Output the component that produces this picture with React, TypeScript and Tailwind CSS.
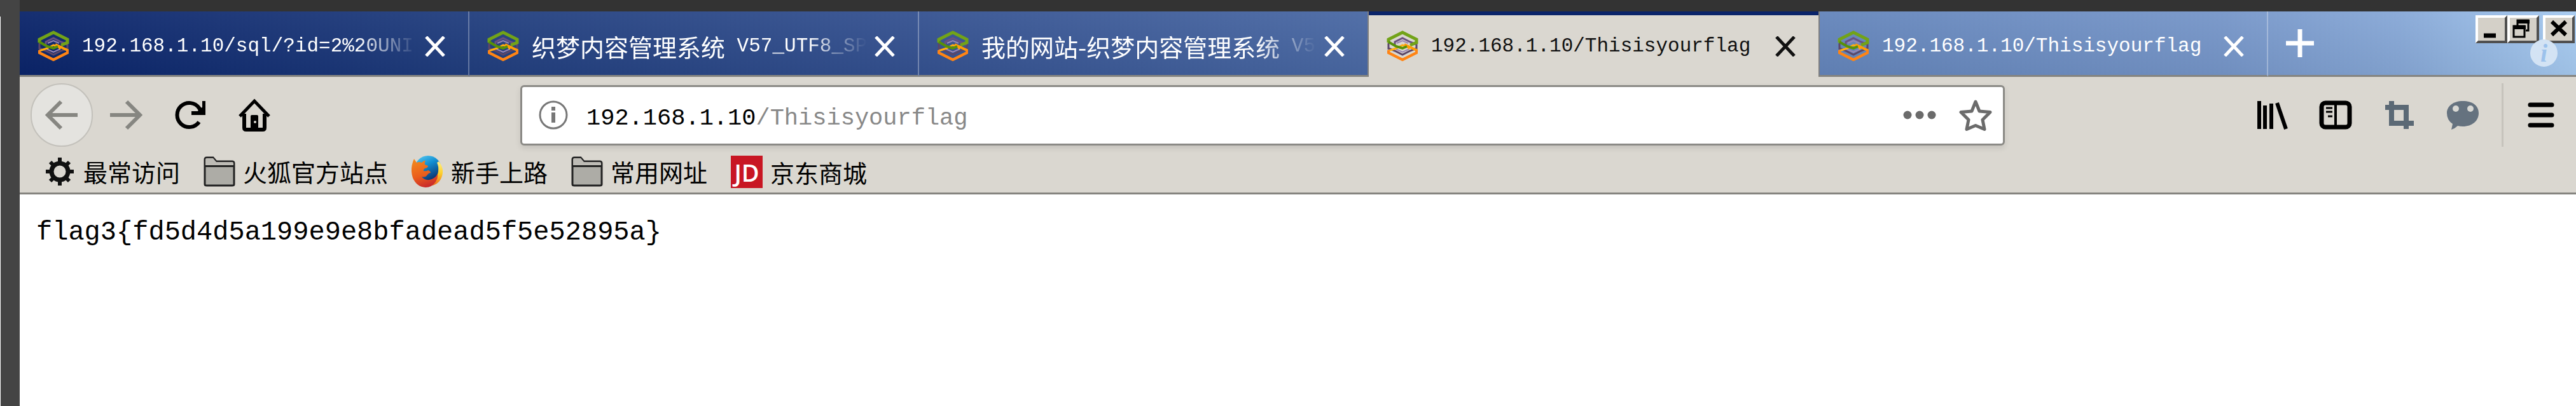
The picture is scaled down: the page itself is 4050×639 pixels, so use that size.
import React from "react";

const MONO = "font-['Liberation_Mono','Noto_Sans_CJK_SC',monospace]";
const CJK = "font-['Noto_Sans_CJK_SC',sans-serif]";

function Favicon() {
  return (
    <svg viewBox="0 0 50 50" className="h-[50px] w-[50px] shrink-0" fill="none" aria-hidden="true">
      <path d="M3 20v10M47 20v10M3 28l10 4 12 6 12-6 10-4" stroke="#5c4668" strokeWidth="3" />
      <path d="M13 24v-6l12-6 12 6 10 4" stroke="#6a5080" strokeWidth="3" />
      <path d="M14 29l11 5 11-5M16 20l9-4 9 4" stroke="#9a86b4" strokeWidth="2" />
      <path d="M3 19v-5L25 3l22 11v5l-10 4" stroke="#72a318" strokeWidth="5" />
      <path d="M36 29l-4-4-7-2-10 5-12 4" stroke="#ffae10" strokeWidth="3" />
      <path d="M28 22l19 9v4L25 46 3 35v-4" stroke="#ff9c08" strokeWidth="4" />
      <path d="M47 31v4L25 46 3 35v-4" stroke="#ff8316" strokeWidth="4" />
      <path d="M3 18l12 7 10 3 7-3" stroke="#579107" strokeWidth="4" />
    </svg>
  );
}

function CloseGlyph() {
  return (
    <svg viewBox="0 0 32 32" className="h-8 w-8" fill="none" stroke="currentColor" strokeWidth="5" aria-hidden="true">
      <path d="M2 1l28 30M30 1L2 31" />
    </svg>
  );
}

function Folder() {
  return (
    <svg viewBox="0 0 50 50" className="h-[50px] w-[50px] shrink-0" aria-hidden="true">
      <path d="M2 45V6q0-3 3-3h10l5 6h25q3 0 3 3v33q0 2-3 2H5q-3 0-3-2z" fill="#adaca6" stroke="#222" strokeWidth="3" />
      <path d="M3 6q0-2 2-2h10l5 6h25q2 0 2 2v3H3z" fill="#bdbbb5" />
      <path d="M2 16.500h46" stroke="#222" strokeWidth="3" />
    </svg>
  );
}

function Gear() {
  return (
    <svg viewBox="0 0 50 50" className="h-[50px] w-[50px] shrink-0" fill="none" stroke="#111" aria-hidden="true">
      <circle cx="25" cy="25" r="13" strokeWidth="7" />
      <path d="M25 3v8M25 39v8M3 25h8M39 25h8M10 10l6 6M34 34l6 6M10 40l6-6M34 16l6-6" strokeWidth="6" />
    </svg>
  );
}

function Firefox() {
  return (
    <svg viewBox="0 0 50 50" className="h-[50px] w-[50px] shrink-0" aria-hidden="true">
      <defs>
        <linearGradient id="globe" x1="0" y1="0" x2="0.5" y2="1">
          <stop offset="0" stopColor="#5fd0f5" />
          <stop offset="0.45" stopColor="#118fd2" />
          <stop offset="1" stopColor="#0b2f6b" />
        </linearGradient>
        <linearGradient id="fox" x1="0.2" y1="0" x2="0.5" y2="1">
          <stop offset="0" stopColor="#f28a1e" />
          <stop offset="0.6" stopColor="#ea5c1c" />
          <stop offset="1" stopColor="#c92a2b" />
        </linearGradient>
        <linearGradient id="tail" x1="0" y1="0" x2="0" y2="1">
          <stop offset="0" stopColor="#fff08a" />
          <stop offset="0.5" stopColor="#fdcf2a" />
          <stop offset="1" stopColor="#ee6a1c" />
        </linearGradient>
      </defs>
      <circle cx="26" cy="21" r="21" fill="url(#globe)" />
      <path d="M43 9q7 9 6 18-2 16-16 20l-9-5q16-3 18-17 1-8-2-14z" fill="url(#tail)" />
      <path d="M4 5l4 6q4-2 8 0 4-4 6-3-2 3-1 6l5 2q0 3-5 4-3 2-2 4 4 1 7-1 4 1 4 4-3 0-5 3-3 5-9 3 4 6 12 5 8-1 13-9 1 6-3 12-6 9-16 9Q8 49 2 35-3 20 4 5z" fill="url(#fox)" />
    </svg>
  );
}

function JdLogo() {
  return (
    <span className="flex h-[51px] w-[50px] shrink-0 items-center justify-center bg-[#c81623] font-['Open_Sans',sans-serif] text-[38px] leading-none font-semibold text-white">
      JD
    </span>
  );
}

type TabData = { cjk?: string; latin?: string; active?: boolean; fade?: boolean; edge: string };

const tabs: TabData[] = [
  { latin: "192.168.1.10/sql/?id=2%20UNI", fade: true, edge: "border-r-2 border-r-white/30" },
  { cjk: "织梦内容管理系统", latin: " V57_UTF8_SP", fade: true, edge: "border-r-2 border-r-white/30" },
  { cjk: "我的网站-织梦内容管理系统", latin: " V5", fade: true, edge: "border-r-2 border-r-[#808080]" },
  { latin: "192.168.1.10/Thisisyourflag", active: true, edge: "" },
  { latin: "192.168.1.10/Thisisyourflag", edge: "border-l-2 border-l-[#808080] border-r-2 border-r-white/30" },
];

function Tab({ tab }: { tab: TabData }) {
  const skin = tab.active
    ? "border-t-[6px] border-t-[#0a246a] bg-[#dad7d0] text-[#111]"
    : "border-b-[3px] border-b-[#85847f] pt-[9px] text-white";
  return (
    <div role="tab" aria-selected={!!tab.active} className={`flex w-[707px] min-w-0 shrink items-center pr-9 pl-7 ${skin} ${tab.edge}`}>
      <Favicon />
      <button
        type="button"
        className={`ml-5 flex min-w-0 flex-1 items-center overflow-hidden text-left text-[31px] leading-[56px] whitespace-pre ${MONO} ${
          tab.fade ? "[mask-image:linear-gradient(to_right,black_82%,transparent)]" : ""
        }`}
      >
        {tab.cjk && <span className={`text-[38px] ${CJK}`}>{tab.cjk}</span>}
        {tab.latin && <span>{tab.latin}</span>}
      </button>
      <button type="button" aria-label="Close tab" className="ml-3 shrink-0">
        <CloseGlyph />
      </button>
    </div>
  );
}

function WindowButton({ label, children }: { label: string; children: React.ReactNode }) {
  return (
    <button
      type="button"
      aria-label={label}
      className="h-11 w-[50px] border-4 border-t-white border-r-[#505050] border-b-[#505050] border-l-white bg-[#d4d0c8]"
    >
      <svg viewBox="0 0 42 36" className="h-9 w-[42px]" fill="none" stroke="#000" aria-hidden="true">
        {children}
      </svg>
    </button>
  );
}

function IconButton({ label, className, children }: { label: string; className?: string; children: React.ReactNode }) {
  return (
    <button type="button" aria-label={label} className={`flex shrink-0 items-center justify-center ${className ?? "h-[100px] w-[98px]"}`}>
      <svg viewBox="0 0 52 52" className="h-[52px] w-[52px]" fill="none" stroke="currentColor" aria-hidden="true">
        {children}
      </svg>
    </button>
  );
}

const bookmarks = [
  { icon: <Gear />, label: "最常访问" },
  { icon: <Folder />, label: "火狐官方站点" },
  { icon: <Firefox />, label: "新手上路" },
  { icon: <Folder />, label: "常用网址" },
  { icon: <JdLogo />, label: "京东商城" },
];

export default function App() {
  return (
    <div className="flex min-h-screen bg-[#333]">
      <aside className="flex w-[31px] shrink-0 flex-col bg-[#444]">
        <div className="h-[26px]" />
        <div className="flex-1 border-l border-white" />
      </aside>
      <div className="flex min-w-0 flex-1 flex-col pt-[18px]">
        <header className="flex h-[103px] bg-[linear-gradient(to_bottom,rgba(255,255,255,0.05),rgba(0,0,0,0.05)),linear-gradient(to_right,#0a246a_0%,#213e7e_18%,#345190_35%,#4a69a4_53%,#6485bb_71%,#7595c8_86%,#86a7d6_93%,#a6caf0_100%)]">
          <div role="tablist" className="flex min-w-0 shrink">
            {tabs.map((tab, i) => (
              <Tab key={i} tab={tab} />
            ))}
          </div>
          <div className="flex flex-1 items-start justify-between border-b-[3px] border-b-[#85847f]">
            <button type="button" aria-label="New tab" className="mt-7 ml-7 text-white">
              <svg viewBox="0 0 44 44" className="h-11 w-11" stroke="currentColor" strokeWidth="7" aria-hidden="true">
                <path d="M22 0v44M0 22h44" />
              </svg>
            </button>
            <div className="relative mt-[6px] mr-[2px] flex">
              <WindowButton label="Minimize">
                <path d="M9 28h19" strokeWidth="7" />
              </WindowButton>
              <WindowButton label="Restore">
                <path d="M12 12V4h17v16h-4" strokeWidth="3" />
                <path d="M11 6h20" strokeWidth="6" />
                <path d="M6 13h17v17H6z" strokeWidth="3" fill="#d4d0c8" />
                <path d="M5 15h20" strokeWidth="6" />
              </WindowButton>
              <span className="w-[6px]" />
              <WindowButton label="Close">
                <path d="M10 6l22 21M32 6L10 27" strokeWidth="6" />
              </WindowButton>
              <span className="absolute top-[38px] right-[27px] flex h-[43px] w-[43px] items-center justify-center rounded-full bg-[#d3e3f4] font-['Liberation_Serif',serif] text-[40px] leading-none font-bold text-[#9cc2ec] italic">
                i
              </span>
            </div>
          </div>
        </header>

        <div className="border-b-[3px] border-b-[#85847f] bg-[#dad7d0]">
          <nav aria-label="Navigation" className="flex h-[120px] items-center pr-[5px] pl-[17px] text-black">
            <div className="flex gap-[3px]">
              <IconButton label="Back" className="h-[100px] w-[98px] rounded-full border-2 border-[#c3c1bb] bg-[#e4e3df] text-[#868681]">
                <path d="M51 26H4M25 5L4 26l21 21" strokeWidth="6" />
              </IconButton>
              <IconButton label="Forward" className="h-[100px] w-[98px] text-[#868681]">
                <path d="M1 26h47M27 5l21 21-21 21" strokeWidth="6" />
              </IconButton>
              <IconButton label="Reload">
                <path d="M40 37A19 19 0 1 1 40 15L44 21" strokeWidth="6" />
                <path d="M45 4h5v22H28v-6h10l2-4 5-2z" fill="currentColor" stroke="none" />
              </IconButton>
              <IconButton label="Home">
                <path d="M3 28L26 4l23 24" strokeWidth="5" />
                <path d="M10 24v22q0 3 3 3h26q3 0 3-3V24" strokeWidth="6" />
                <path d="M20 50V28q0-2 2-2h8q2 0 2 2v22z" fill="currentColor" stroke="none" />
                <circle cx="27" cy="37" r="2" fill="#dad7d0" stroke="none" />
              </IconButton>
            </div>

            <form className={`mr-[370px] ml-[369px] flex h-[95px] min-w-0 flex-1 items-center rounded-md border-[3px] border-[#8b8a86] bg-white pr-[17px] pl-[25px] text-[37px] shadow-[0_4px_10px_rgba(0,0,0,0.1)] ${MONO}`}>
              <button type="button" aria-label="Site information" className="shrink-0 text-[#777]">
                <svg viewBox="0 0 48 48" className="h-12 w-12" fill="none" stroke="currentColor" aria-hidden="true">
                  <circle cx="24" cy="24" r="21" strokeWidth="3" />
                  <path d="M24 20v16M24 11v6" strokeWidth="6" />
                </svg>
              </button>
              <label htmlFor="address" className="ml-7 pt-3 text-black">
                192.168.1.10
              </label>
              <input id="address" type="text" defaultValue="/Thisisyourflag" className="min-w-0 flex-1 bg-transparent pt-3 text-[#888] outline-none" />
              <IconButton label="Page actions" className="text-[#6b6b6b]">
                <g fill="currentColor" stroke="none">
                  <circle cx="7" cy="26" r="6.500" />
                  <circle cx="26" cy="26" r="6.500" />
                  <circle cx="45" cy="26" r="6.500" />
                </g>
              </IconButton>
              <IconButton label="Bookmark this page" className="ml-9 text-[#6b6b6b]">
                <path d="M26 5l6 15 17 1.500-12 12 3 15-14-6-14 6 3-15-12-12L20 20z" strokeWidth="5" strokeLinejoin="round" />
              </IconButton>
            </form>

            <IconButton label="Library" className="h-[100px] w-[100px]">
              <path d="M6 4v44" strokeWidth="6" />
              <path d="M15 11v37M25 8v40" strokeWidth="6" />
              <path d="M34 7l14 41" strokeWidth="6" />
            </IconButton>
            <IconButton label="Sidebars" className="h-[100px] w-[100px]">
              <rect x="4" y="7" width="44" height="38" rx="6" strokeWidth="7" />
              <path d="M26 6v40" strokeWidth="4" />
              <path d="M11 15h10M11 21h10M14 28h7" strokeWidth="3" />
            </IconButton>
            <IconButton label="Screenshot" className="h-[100px] w-[100px] text-[#5b6975]">
              <path d="M14 4v35h35M4 14h33v34" strokeWidth="8" />
            </IconButton>
            <IconButton label="Chat" className="h-[100px] w-[100px] text-[#65727f]">
              <path d="M26 4C11 4 1 12 1 23q0 11 9 17-1 5-2 9 6-2 10-6 4 1 8 1c15 0 25-9 25-21S41 4 26 4z" fill="currentColor" stroke="none" />
              <circle cx="15" cy="16" r="5" fill="#d8d8d4" stroke="none" />
              <circle cx="38" cy="16" r="5" fill="#d8d8d4" stroke="none" />
            </IconButton>
            <div className="mr-[9px] ml-[11px] h-[100px] w-[3px] shrink-0 bg-[#c6c3bc]" />
            <IconButton label="Menu" className="h-[100px] w-[100px]">
              <path d="M9 10h34M9 26h34M9 42h34" strokeWidth="7" strokeLinecap="round" />
            </IconButton>
          </nav>

          <nav aria-label="Bookmarks" className="flex h-[62px] items-start gap-[37px] pt-1 pl-[38px]">
            {bookmarks.map((b) => (
              <a key={b.label} href="#" className={`flex items-center gap-3 text-[38px] leading-[50px] whitespace-nowrap text-black ${CJK}`}>
                {b.icon}
                <span>{b.label}</span>
              </a>
            ))}
          </nav>
        </div>

        <main className={`flex-1 bg-white pt-8 pl-[26px] text-[42px] leading-[56px] text-black ${MONO}`}>
          <p>{"flag3{fd5d4d5a199e9e8bfadead5f5e52895a}"}</p>
        </main>
      </div>
    </div>
  );
}
